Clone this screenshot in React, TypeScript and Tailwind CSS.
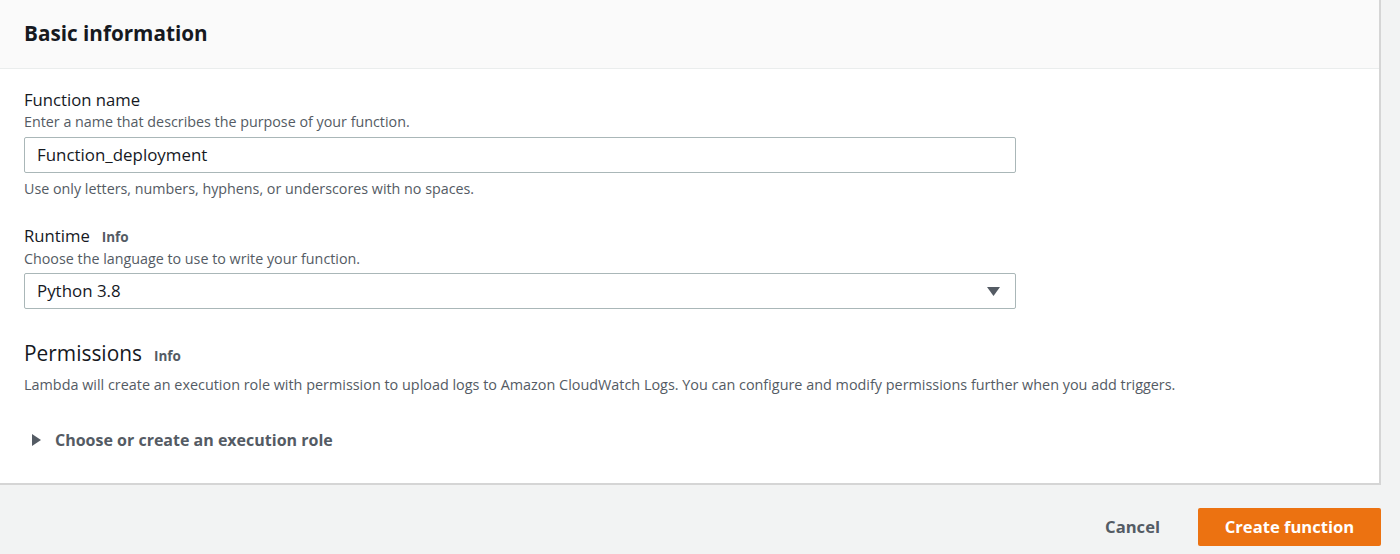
import React from "react";

export default function App() {
  return (
    <div className="w-[1400px] h-[554px] bg-[#f2f3f3] overflow-hidden" style={{ fontFamily: '"Open Sans", "Noto Sans", Arial, sans-serif' }}>
      <div className="w-[1381px] bg-white border-r-2 border-b-2 border-[#d5d5d5]">
        <div className="h-[69px] bg-[#fafafa] border-b border-[#eaeded] px-6 flex items-center">
          <h2 className="text-[20.7px] font-bold text-[#16191f] leading-none pb-[2px]">Basic information</h2>
        </div>
        <div className="px-6 pt-[20px] pb-[32px]">
          <div className="text-[16.7px] text-[#16191f] leading-[22px]">Function name</div>
          <div className="text-[14.3px] text-[#545b64] leading-[22px]">Enter a name that describes the purpose of your function.</div>
          <div className="mt-[4px] w-[992px] h-[36px] border border-[#aab7b8] rounded-[2px] flex items-center px-3 text-[16.9px] text-[#16191f]">Function_deployment</div>
          <div className="mt-[5px] text-[14.3px] text-[#545b64] leading-[22px]">Use only letters, numbers, hyphens, or underscores with no spaces.</div>

          <div className="mt-[25px] flex items-baseline gap-3 leading-[22px]">
            <span className="text-[16.7px] text-[#16191f]">Runtime</span>
            <span className="text-[13.5px] font-bold text-[#545b64]">Info</span>
          </div>
          <div className="text-[14.3px] text-[#545b64] leading-[22px]">Choose the language to use to write your function.</div>
          <div className="mt-[3px] w-[992px] h-[36px] border border-[#aab7b8] rounded-[2px] flex items-center justify-between px-3 text-[16.9px] text-[#16191f]">
            <span>Python 3.8</span>
            <svg width="13" height="9" viewBox="0 0 13 9" className="mr-[3px]"><path d="M0 0 L13 0 L6.5 9 Z" fill="#545b64" /></svg>
          </div>

          <div className="mt-[30px] flex items-baseline gap-3 leading-[28px]">
            <span className="text-[20.9px] text-[#16191f]">Permissions</span>
            <span className="text-[13.5px] font-bold text-[#545b64]">Info</span>
          </div>
          <div className="mt-[4px] text-[14.4px] text-[#545b64] leading-[22px]">Lambda will create an execution role with permission to upload logs to Amazon CloudWatch Logs. You can configure and modify permissions further when you add triggers.</div>

          <div className="mt-[33px] flex items-center gap-[14px] pl-[8px] h-[22px]">
            <svg width="9" height="12" viewBox="0 0 9 12"><path d="M0 0 L9 6 L0 12 Z" fill="#545b64" /></svg>
            <span className="text-[16px] font-bold text-[#545b64]">Choose or create an execution role</span>
          </div>
        </div>
      </div>
      <div className="w-[1381px] flex justify-end items-center gap-[38px] pt-[23px]">
        <span className="text-[16.6px] font-bold text-[#545b64]">Cancel</span>
        <div className="w-[183px] h-[38px] bg-[#ec7211] rounded-[2px] flex items-center justify-center text-[16.6px] font-bold text-white">Create function</div>
      </div>
    </div>
  );
}
